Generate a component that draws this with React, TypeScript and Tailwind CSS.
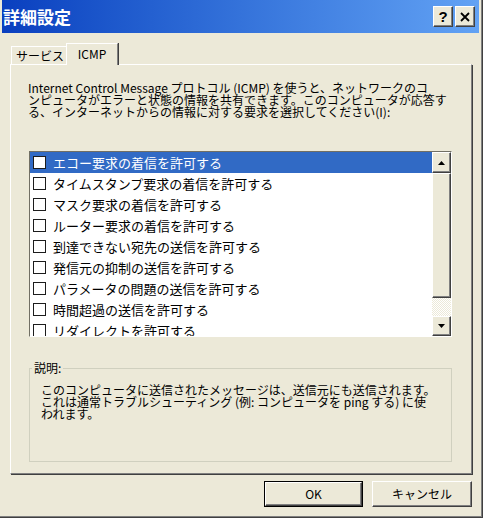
import React from "react";

const items = [
  "エコー要求の着信を許可する",
  "タイムスタンプ要求の着信を許可する",
  "マスク要求の着信を許可する",
  "ルーター要求の着信を許可する",
  "到達できない宛先の送信を許可する",
  "発信元の抑制の送信を許可する",
  "パラメータの問題の送信を許可する",
  "時間超過の送信を許可する",
  "リダイレクトを許可する",
];

// classic raised 3D edge
const raised =
  "bg-[#ece9d8] border border-t-white border-l-white border-r-[#404040] border-b-[#404040] shadow-[inset_-1px_-1px_0_#808080]";

function Arrow({ down }: { down?: boolean }) {
  return (
    <svg width="7" height="4" viewBox="0 0 7 4">
      <path d={down ? "M0 0h7L3.5 4z" : "M3.5 0L7 4H0z"} fill="#000" />
    </svg>
  );
}

export default function App() {
  return (
    <div className="w-[483px] h-[518px] bg-[#ece9d8] border-r border-b border-r-[#404040] border-b-[#404040] overflow-hidden text-black font-['Noto_Sans_CJK_JP',sans-serif]">
      <div className="h-full flex flex-col px-[2px] border-r border-b border-r-[#808080] border-b-[#808080]">
        {/* Title bar */}
        <div className="h-[33px] shrink-0 flex items-center justify-between bg-linear-to-r from-[#0a3fbf] to-[#62a2f4]">
          <span className="pl-[1px] text-[17px] font-bold text-white leading-none">詳細設定</span>
          <div className="flex gap-[2px] pr-[4px]">
            <div className={`${raised} w-[20px] h-[21px] flex items-center justify-center`}>
              <span className="text-[15px] font-bold leading-none font-['Liberation_Sans',sans-serif]">?</span>
            </div>
            <div className={`${raised} w-[20px] h-[21px] flex items-center justify-center`}>
              <svg width="10" height="10" viewBox="0 0 10 10">
                <path d="M1 1L9 9M9 1L1 9" stroke="#000" strokeWidth="1.8" />
              </svg>
            </div>
          </div>
        </div>

        {/* Tabs */}
        <div className="mt-[10px] ml-[8px] h-[21px] flex items-end">
          <div className="ml-[1px] w-[57px] h-[18px] border-t border-l border-white flex items-center justify-center text-[12px] leading-[12px]">
            サービス
          </div>
          <div className="relative z-10 -ml-[2px] -mb-px w-[52px] h-[22px] bg-[#ece9d8] border-t border-l border-white border-r border-r-[#808080] shadow-[1px_0_0_#404040] flex items-center justify-center text-[12px] leading-[12px] pb-[2px]">
            ICMP
          </div>
        </div>

        {/* Tab panel */}
        <div className="ml-[8px] mr-[7px] h-[410px] shrink-0 flex flex-col border-t border-l border-white border-r border-b border-r-[#808080] border-b-[#808080] shadow-[1px_1px_0_#404040] pt-[17px] pl-[18px] pr-[19px]">
          <p className="-ml-px text-[12px] leading-[12px] whitespace-nowrap">
            Internet Control Message プロトコル (ICMP) を使うと、ネットワークのコ
            <br />
            ンピュータがエラーと状態の情報を共有できます。このコンピュータが応答す
            <br />
            る、インターネットからの情報に対する要求を選択してください(I):
          </p>

          {/* List */}
          <div className="mt-[33px] h-[186px] flex bg-white border border-t-[#716f64] border-l-[#716f64] border-r-white border-b-white">
            <div className="flex-1 overflow-hidden">
              {items.map((t, i) => (
                <div
                  key={i}
                  className={`h-[21px] shrink-0 flex items-center pl-[3px] gap-[7px] text-[13px] leading-[13px] whitespace-nowrap ${
                    i === 0 ? "bg-[#316ac5] text-white" : ""
                  }`}
                >
                  <span className="w-[13px] h-[13px] bg-white border border-[#1c1c1c]" />
                  <span>{t}</span>
                </div>
              ))}
            </div>
            <div className="w-[19px] flex flex-col">
              <div className={`${raised} h-[21px] flex items-center justify-center`}>
                <Arrow />
              </div>
              <div className={`${raised} h-[125px]`} />
              <div className="h-[18px] bg-[image:repeating-conic-gradient(#ffffff_0_25%,#ece9d8_0_50%)] bg-[length:2px_2px]" />
              <div className={`${raised} flex-1 flex items-center justify-center`}>
                <Arrow down />
              </div>
            </div>
          </div>

          {/* Description group */}
          <fieldset className="mt-[25px] h-[100px] border border-[#d0d0bf] pl-[2px]">
            <legend className="px-[2px] text-[12px] leading-[12px]">説明:</legend>
            <p className="pt-[10px] pl-[9px] text-[12px] leading-[12px] whitespace-nowrap">
              このコンピュータに送信されたメッセージは、送信元にも送信されます。
              <br />
              これは通常トラブルシューティング (例: コンピュータを ping する) に使
              <br />
              われます。
            </p>
          </fieldset>
        </div>

        {/* Buttons */}
        <div className="mt-[7px] flex justify-end gap-[9px] pr-[7px]">
          <div className="w-[99px] h-[26px] border border-black">
            <div className={`${raised} h-full flex items-center justify-center text-[12px] leading-none`}>OK</div>
          </div>
          <div className={`${raised} w-[100px] h-[26px] flex items-center justify-center text-[12px] leading-none`}>
            キャンセル
          </div>
        </div>
      </div>
    </div>
  );
}
